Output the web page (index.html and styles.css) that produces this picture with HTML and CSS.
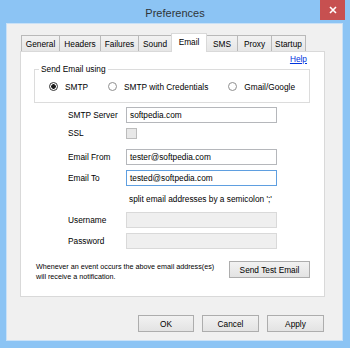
FILE: index.html
```html
<!DOCTYPE html>
<html lang="en">
<head>
    <meta charset="UTF-8">
    <title>Preferences</title>
    <link rel="stylesheet" href="styles.css">
</head>
<body>
    <div class="window">
        <div class="titlebar">
            <span class="title">Preferences</span>
            <div class="close-btn">
                <svg width="8" height="8" viewBox="0 0 8 8"><path d="M1 1L7 7M7 1L1 7" stroke="#fff" stroke-width="1.6"/></svg>
            </div>
        </div>
        <div class="client">
            <div class="tabs">
                <div class="tab">General</div>
                <div class="tab">Headers</div>
                <div class="tab">Failures</div>
                <div class="tab">Sound</div>
                <div class="tab active">Email</div>
                <div class="tab">SMS</div>
                <div class="tab">Proxy</div>
                <div class="tab">Startup</div>
            </div>
            <div class="panel">
                <div class="help-row"><a href="#" class="help">Help</a></div>
                <fieldset class="group">
                    <legend>Send Email using</legend>
                    <div class="radio-row">
                        <label class="radio-item"><span class="radio checked"></span>SMTP</label>
                        <label class="radio-item"><span class="radio"></span>SMTP with Credentials</label>
                        <label class="radio-item"><span class="radio"></span>Gmail/Google</label>
                    </div>
                </fieldset>
                <div class="form">
                    <div class="label">SMTP Server</div>
                    <div class="field">softpedia.com</div>
                    <div class="label label-check">SSL</div>
                    <div><span class="checkbox"></span></div>
                    <div class="label">Email From</div>
                    <div class="field">tester@softpedia.com</div>
                    <div class="label">Email To</div>
                    <div class="field focused">tested@softpedia.com</div>
                    <div class="hint">split email addresses by a semicolon ';'</div>
                    <div class="label">Username</div>
                    <div class="field disabled"></div>
                    <div class="label">Password</div>
                    <div class="field disabled"></div>
                </div>
                <div class="notice-row">
                    <p class="notice">Whenever an event occurs the above email address(es)<br>will receive a notification.</p>
                    <div class="btn btn-test">Send Test Email</div>
                </div>
            </div>
            <div class="actions">
                <div class="btn btn-ok">OK</div>
                <div class="btn btn-cancel">Cancel</div>
                <div class="btn btn-apply">Apply</div>
            </div>
        </div>
    </div>
</body>
</html>
```

FILE: styles.css
```css
* {
    box-sizing: border-box;
}

body {
    margin: 0;
    font-family: "Liberation Sans", Arial, sans-serif;
    font-size: 8.3px;
    color: #000;
}

.window {
    width: 350px;
    height: 348px;
    background: #8cc4f4;
    display: flex;
    flex-direction: column;
}

/* Title bar */
.titlebar {
    height: 23px;
    position: relative;
    display: flex;
    justify-content: center;
    align-items: center;
    padding-top: 2px;
}

.title {
    font-size: 11px;
    color: #2f3438;
}

.close-btn {
    position: absolute;
    top: 0;
    right: 5px;
    width: 25px;
    height: 20px;
    background: #c75050;
    display: flex;
    align-items: center;
    justify-content: center;
}

/* Client area */
.client {
    flex: 1;
    margin: 0 7px 7px 6px;
    background: #f0f0f0;
    border: 1px solid #c9e1f7;
}

.tabs {
    display: flex;
    align-items: flex-end;
    height: 18px;
    margin: 9px 0 0 14px;
}

.tab {
    height: 16px;
    border: 1px solid #b9b9b9;
    border-bottom: none;
    background: linear-gradient(#f2f2f2, #e6e6e6);
    display: flex;
    align-items: center;
    justify-content: center;
    margin-left: -1px;
}

.tab:nth-child(1) { width: 39px; margin-left: 0; }
.tab:nth-child(2) { width: 42px; }
.tab:nth-child(3) { width: 39px; }
.tab:nth-child(4) { width: 34px; }
.tab:nth-child(5) { width: 36px; }
.tab:nth-child(6) { width: 32px; }
.tab:nth-child(7) { width: 35px; }
.tab:nth-child(8) { width: 35px; }

.tab.active {
    height: 19px;
    margin-bottom: -1px;
    background: #fff;
    border-color: #d9d9d9;
    align-items: flex-start;
    padding-top: 3px;
    z-index: 1;
}

.panel {
    margin-left: 13px;
    width: 305px;
    height: 246px;
    background: #fff;
    border: 1px solid #d9d9d9;
}

.help-row {
    height: 12px;
    line-height: 10px;
    padding: 2px 17px 0 0;
    text-align: right;
}

.help {
    color: #0033dd;
    text-decoration: underline;
}

/* Group box */
.group {
    margin: 0 0 0 13px;
    width: 276px;
    border: 1px solid #dcdcdc;
    padding: 6px 0 10px 0;
}

.group legend {
    margin-left: 4px;
    padding: 0 2px;
    line-height: 11px;
}

.radio-row {
    display: flex;
    align-items: center;
    gap: 20px;
    padding-left: 14px;
    height: 11px;
}

.radio-item {
    display: flex;
    align-items: center;
    gap: 7px;
}

.radio {
    width: 9px;
    height: 9px;
    border-radius: 50%;
    border: 1px solid #8f8f8f;
    background: #fff;
}

.radio.checked {
    border-color: #333;
    background: radial-gradient(circle, #1a1a1a 0 2px, #fff 2.6px);
}

/* Form fields */
.form {
    display: grid;
    grid-template-columns: 58px 151px;
    grid-auto-rows: 21px;
    align-items: start;
    margin-top: 4px;
    padding-left: 47px;
}

.label {
    line-height: 16px;
}

.label-check {
    line-height: 11px;
}

.field {
    height: 16px;
    border: 1px solid #b5b7bb;
    padding: 0 3px;
    line-height: 14px;
}

.field.focused {
    border-color: #5f9fe0;
}

.field.disabled {
    background: #efefef;
    border-color: #d9d9d9;
}

.checkbox {
    display: block;
    width: 11px;
    height: 11px;
    border: 1px solid #bcbcbc;
    background: #e8e8e8;
}

.hint {
    grid-column: 2;
    line-height: 16px;
    padding-left: 3px;
    white-space: nowrap;
}

.notice-row {
    display: flex;
    justify-content: space-between;
    align-items: flex-start;
    margin-top: 7px;
    padding: 0 14px 0 15px;
}

.notice {
    margin: 0;
    padding-top: 1px;
    font-size: 7.2px;
    line-height: 9.5px;
}

/* Buttons */
.btn {
    height: 17px;
    border: 1px solid #adadad;
    background: linear-gradient(#f2f2f2, #e3e3e3);
    display: flex;
    align-items: center;
    justify-content: center;
}

.btn-test { width: 81px; }
.btn-ok { width: 56px; }
.btn-cancel { width: 57px; }
.btn-apply { width: 57px; }

.actions {
    display: flex;
    justify-content: flex-end;
    gap: 8px;
    margin-top: 18px;
    padding-right: 18px;
}
```
